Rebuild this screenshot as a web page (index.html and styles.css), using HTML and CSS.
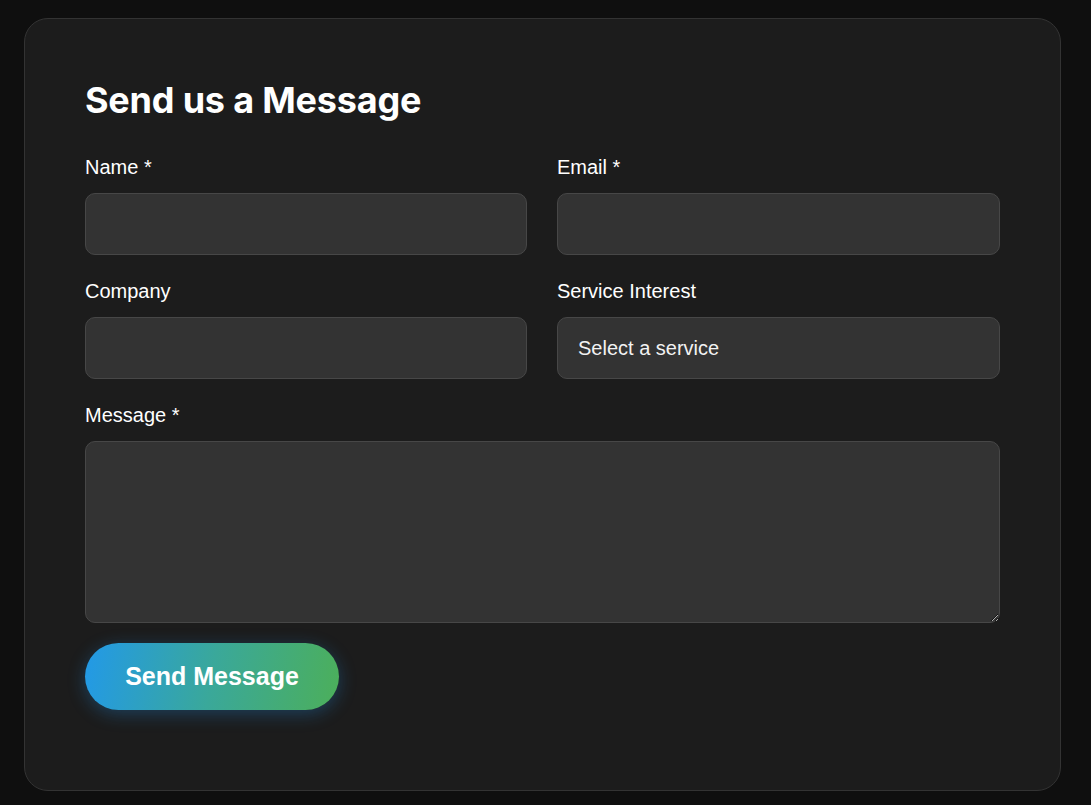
FILE: index.html
```html
<!DOCTYPE html>
<html lang="en">
<head>
<meta charset="utf-8">
<title>Contact</title>
<link rel="stylesheet" href="styles.css">
</head>
<body>
<section class="card">
  <h2 class="title">Send us a Message</h2>
  <form class="form">
    <div class="row">
      <div class="group">
        <label class="label">Name *</label>
        <input class="field" type="text">
      </div>
      <div class="group">
        <label class="label">Email *</label>
        <input class="field" type="email">
      </div>
    </div>
    <div class="row">
      <div class="group">
        <label class="label">Company</label>
        <input class="field" type="text">
      </div>
      <div class="group">
        <label class="label">Service Interest</label>
        <div class="field select">Select a service</div>
      </div>
    </div>
    <div class="group">
      <label class="label">Message *</label>
      <textarea class="field area"></textarea>
    </div>
    <button class="btn" type="button">Send Message</button>
  </form>
</section>
</body>
</html>
```

FILE: styles.css
```css
* { box-sizing: border-box; }
html, body { margin: 0; }
body {
  background: #0f0f0f;
  padding: 18px 30px 14px 24px;
  font-family: "Liberation Sans", Arial, sans-serif;
  color: #fff;
}
.card {
  background: #1c1c1c;
  border: 1px solid #333;
  border-radius: 24px;
  padding: 60px 60px 80px 60px;
  width: 1037px;
  height: 773px;
}
.title {
  font-family: Inter, "Noto Sans", sans-serif;
  font-weight: 700;
  font-size: 36px;
  line-height: 42px;
  margin: 0 0 34px 0;
  letter-spacing: -0.2px;
  color: #fff;
}
.form { display: flex; flex-direction: column; }
.row {
  display: grid;
  grid-template-columns: 442px 443px;
  gap: 30px;
}
.group {
  display: flex;
  flex-direction: column;
  margin-bottom: 24px;
}
.label {
  display: block;
  font-size: 20px;
  line-height: 24px;
  margin-bottom: 14px;
  color: #fff;
}
.field {
  display: block;
  width: 100%;
  height: 62px;
  background: #333;
  border: 1px solid #474747;
  border-radius: 10px;
  padding: 0 20px;
  color: #eee;
  font-family: "Liberation Sans", Arial, sans-serif;
  font-size: 20px;
  outline: none;
}
.select {
  display: flex;
  align-items: center;
  color: #f2f2f2;
}
.area {
  height: 182px;
  resize: vertical;
  padding: 16px 20px;
}
.group:last-of-type { margin-bottom: 20px; }
.btn {
  align-self: flex-start;
  width: 254px;
  height: 67px;
  border: none;
  border-radius: 34px;
  background: linear-gradient(100deg, #2299e8 0%, #3aa89a 50%, #4caf5a 100%);
  color: #fff;
  font-family: "Liberation Sans", Arial, sans-serif;
  font-weight: 700;
  font-size: 25px;
  box-shadow: 0 4px 18px rgba(33, 150, 243, 0.3);
  cursor: pointer;
}
```
